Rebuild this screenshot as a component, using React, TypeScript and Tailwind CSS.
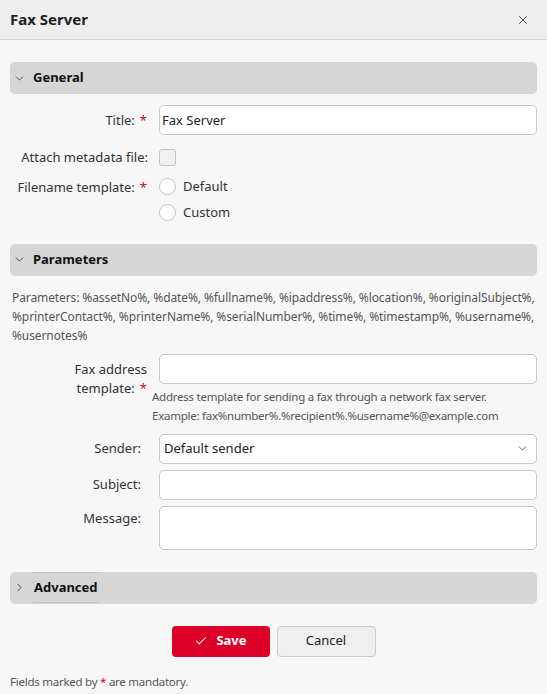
import { Check, ChevronDown, ChevronRight, X } from "lucide-react"

const font = { fontFamily: '"Segoe UI", "Noto Sans", sans-serif' }

function SectionHeader({ title, open = true }: { title: string; open?: boolean }) {
  return (
    <div className="flex h-[32px] items-center gap-[7px] rounded-[5px] bg-[#d6d6d6] pl-[3px]">
      {open ? (
        <ChevronDown size={13} strokeWidth={1.5} className="text-[#333]" />
      ) : (
        <ChevronRight size={13} strokeWidth={1.5} className="text-[#333]" />
      )}
      <span className="text-[13px] font-bold text-[#111]">{title}</span>
    </div>
  )
}

function Label({ children, required }: { children: React.ReactNode; required?: boolean }) {
  return (
    <div
      className={`w-[149px] shrink-0 text-right text-[13px] leading-[19px] text-[#333] ${
        required ? "pr-[12px]" : "pr-[18px]"
      }`}
    >
      {children}
      {required && <span className="ml-[5px] text-[#d0021b]">*</span>}
    </div>
  )
}

const inputCls =
  "h-[30px] w-full rounded-[5px] border border-[#c9c9c9] bg-white px-[2px] text-[13px] text-[#222] outline-none"

const smallText = "text-[11.5px] leading-[19px] tracking-[-0.25px] text-[#555]"

export default function App() {
  return (
    <div style={font} className="h-[694px] w-[547px] overflow-hidden bg-[#f7f7f7] text-[#333]">
      <div className="flex h-[40px] items-center justify-between border-b border-[#d6d6d6] bg-[#eeeeee] pl-[10px] pr-[17px]">
        <span className="text-[15px] font-bold text-[#222]">Fax Server</span>
        <X size={14} strokeWidth={1.6} className="text-[#444]" />
      </div>

      <div className="px-[10px] pt-[22px]">
        <SectionHeader title="General" />

        <div className="mt-[11px] flex items-center">
          <Label required>Title:</Label>
          <input className={inputCls} defaultValue="Fax Server" />
        </div>

        <div className="mt-[13px] flex items-center">
          <div className="w-[149px] shrink-0 whitespace-nowrap pr-[11px] text-right text-[13px] text-[#333]">
            Attach metadata file:
          </div>
          <div className="h-[17px] w-[17px] rounded-[3px] border border-[#c4c4c4] bg-[#f1f1f1]" />
        </div>

        <div className="mt-[10px] flex items-start">
          <Label required>Filename template:</Label>
          <div className="flex flex-col gap-[9px]">
            <label className="flex items-center gap-[7px] text-[13px] leading-[17px] text-[#333]">
              <span className="h-[17px] w-[17px] rounded-full border border-[#c4c4c4] bg-white" />
              Default
            </label>
            <label className="flex items-center gap-[7px] text-[13px] leading-[17px] text-[#333]">
              <span className="h-[17px] w-[17px] rounded-full border border-[#c4c4c4] bg-white" />
              Custom
            </label>
          </div>
        </div>

        <div className="mt-[23px]">
          <SectionHeader title="Parameters" />
        </div>

        <p className="mt-[12px] whitespace-nowrap pl-[2px] text-[12px] leading-[19px] tracking-[-0.1px] text-[#555]">
          Parameters: %assetNo%, %date%, %fullname%, %ipaddress%, %location%, %originalSubject%,
          <br />
          %printerContact%, %printerName%, %serialNumber%, %time%, %timestamp%, %username%,
          <br />
          %usernotes%
        </p>

        <div className="mt-[9px] flex items-start">
          <Label required>
            <span className="block pt-[6px]">Fax address</span>
            template:
          </Label>
          <div className="min-w-0 flex-1">
            <input className={inputCls} />
            <p className={`-ml-[7px] mt-[3px] whitespace-nowrap ${smallText}`}>
              Address template for sending a fax through a network fax server.
              <br />
              Example: fax%number%.%recipient%.%username%@example.com
            </p>
          </div>
        </div>

        <div className="mt-[9px] flex items-center">
          <Label>Sender:</Label>
          <div className="flex h-[30px] flex-1 items-center justify-between rounded-[5px] border border-[#c9c9c9] bg-white pl-[4px] pr-[7px] text-[13px] text-[#222]">
            <span>Default sender</span>
            <ChevronDown size={13} strokeWidth={1.5} className="text-[#444]" />
          </div>
        </div>

        <div className="mt-[6px] flex items-center">
          <Label>Subject:</Label>
          <input className={inputCls} />
        </div>

        <div className="mt-[6px] flex items-start">
          <Label>
            <span className="block pt-[3px]">Message:</span>
          </Label>
          <textarea className="block h-[44px] flex-1 resize-none rounded-[5px] border border-[#c9c9c9] bg-white outline-none" />
        </div>

        <div className="mt-[22px] flex h-[32px] items-center gap-[7px] rounded-[5px] bg-[#d6d6d6] pl-[3px]">
          <ChevronRight size={13} strokeWidth={1.5} className="text-[#333]" />
          <span className="border-y border-[#a8cbe0] px-[1px] py-[5px] text-[13px] font-bold text-[#111]">
            Advanced
          </span>
        </div>

        <div className="mt-[22px] flex justify-center gap-[7px]">
          <button className="flex h-[31px] w-[98px] items-center justify-center gap-[8px] rounded-[4px] bg-[#dc0028] text-[13px] font-bold text-white">
            <Check size={14} strokeWidth={1.8} />
            Save
          </button>
          <button className="h-[31px] w-[99px] rounded-[4px] border border-[#cccccc] bg-[#efefef] text-[13px] text-[#222]">
            Cancel
          </button>
        </div>

        <p className={`mt-[15px] ${smallText}`}>
          Fields marked by <span className="text-[#d0021b]">*</span> are mandatory.
        </p>
      </div>
    </div>
  )
}
